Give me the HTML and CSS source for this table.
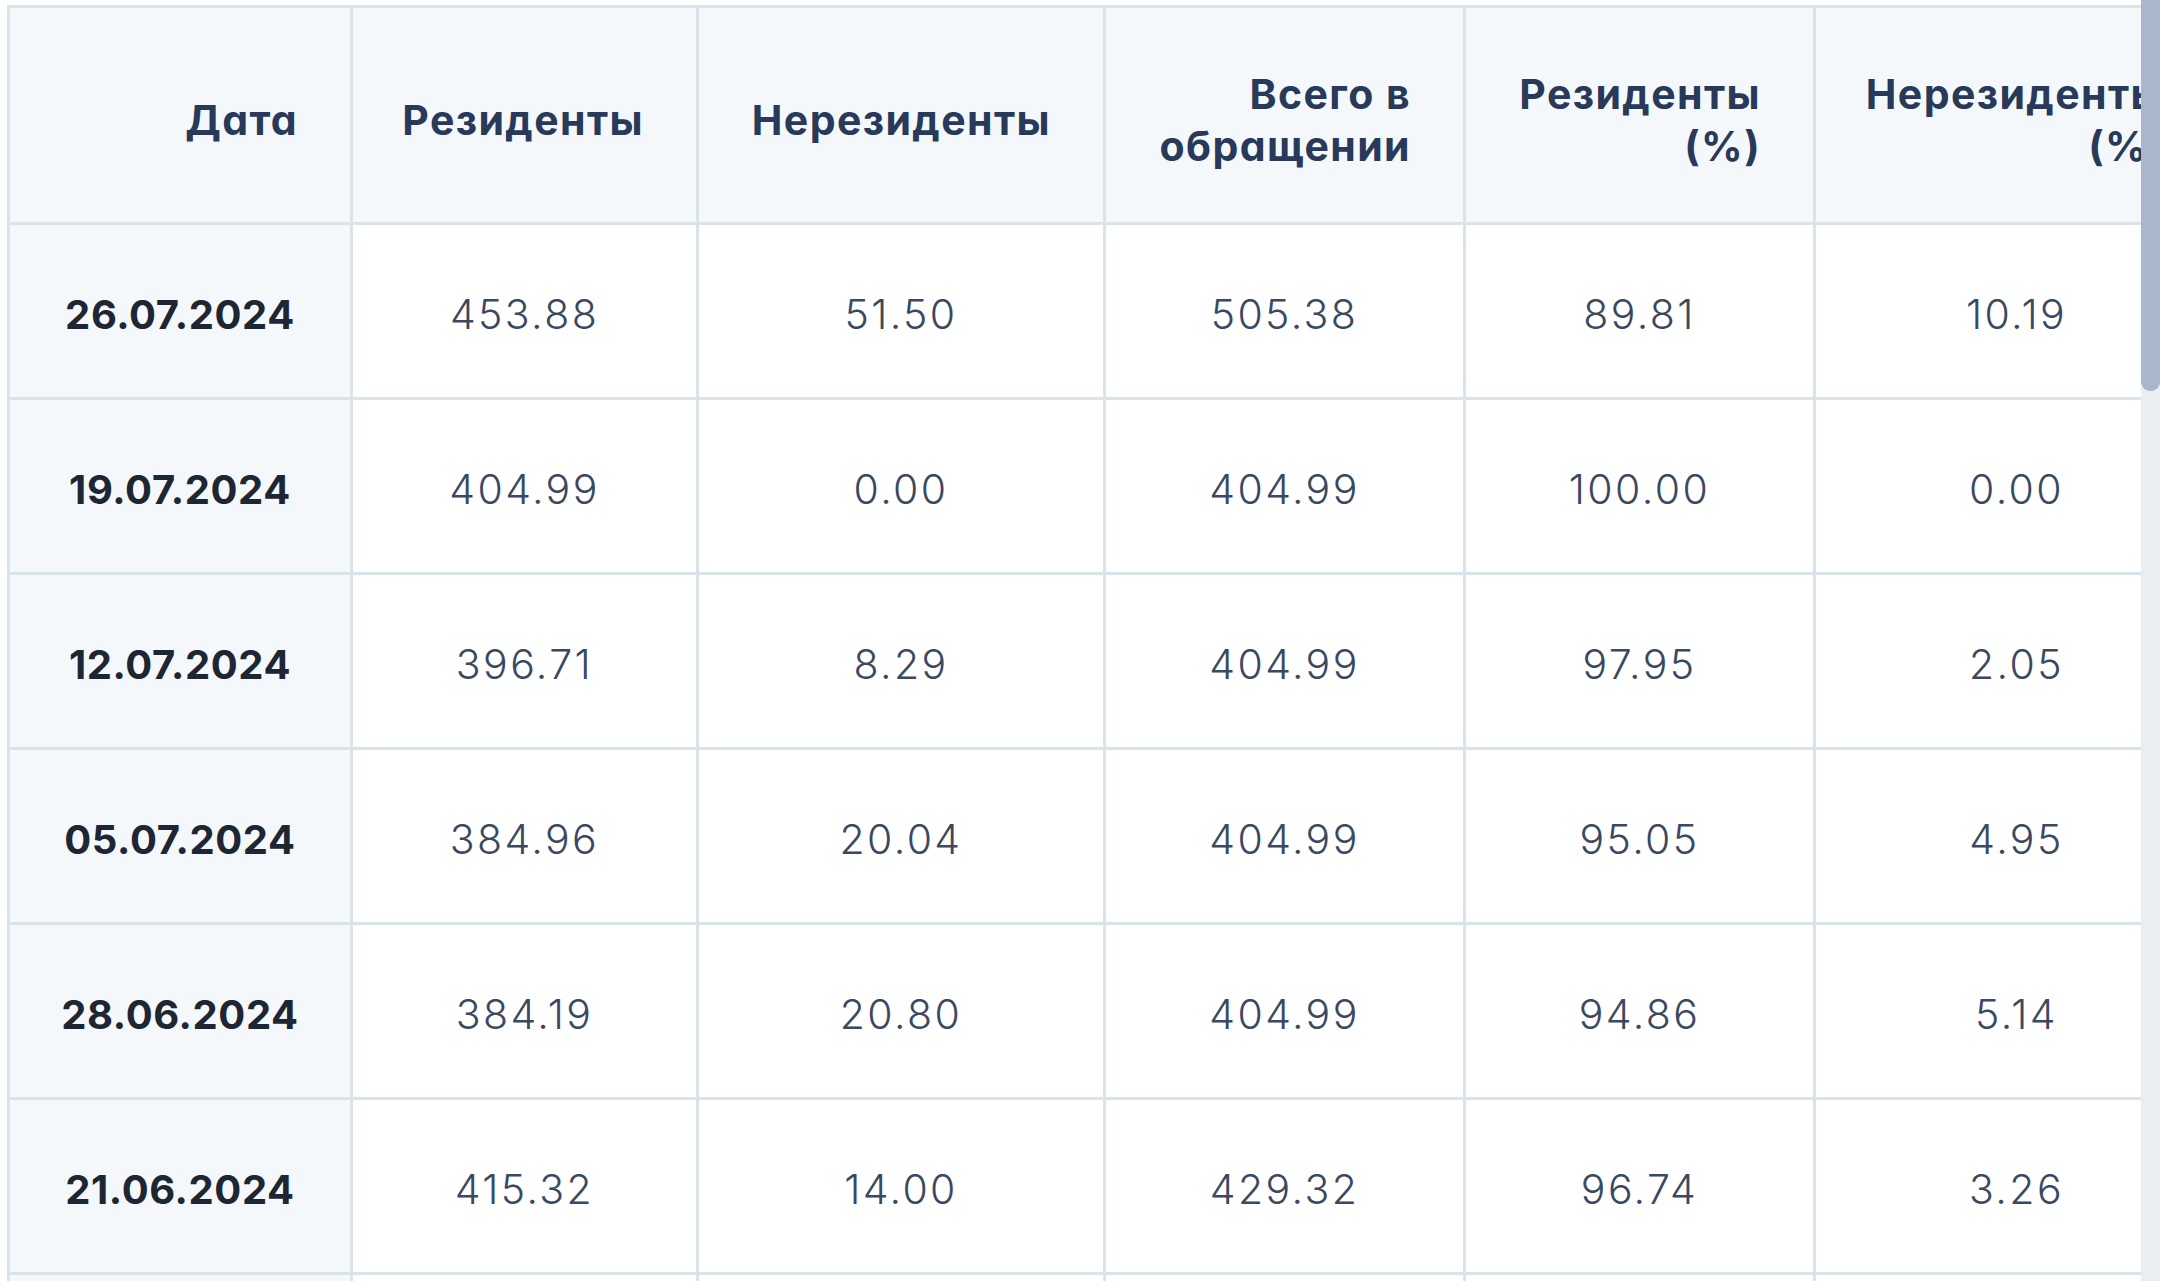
FILE: index.html
```html
<!DOCTYPE html>
<html lang="ru">
<head>
<meta charset="utf-8">
<title>Объём в обращении</title>
<link rel="stylesheet" href="styles.css">
</head>
<body>
<div class="frame">
  <div class="viewport">
    <table class="grid">
      <colgroup>
        <col class="c-date">
        <col class="c-res">
        <col class="c-nonres">
        <col class="c-total">
        <col class="c-resp">
        <col class="c-nonresp">
      </colgroup>
      <thead>
        <tr>
          <th class="h">Дата</th>
          <th class="h">Резиденты</th>
          <th class="h">Нерезиденты</th>
          <th class="h">Всего в обращении</th>
          <th class="h h-joined">Резиденты (%)</th>
          <th class="h">Нерезиденты (%)</th>
        </tr>
      </thead>
      <tbody>
        <tr><td class="d">26.07.2024</td><td>453.88</td><td>51.50</td><td>505.38</td><td>89.81</td><td>10.19</td></tr>
        <tr><td class="d">19.07.2024</td><td>404.99</td><td>0.00</td><td>404.99</td><td>100.00</td><td>0.00</td></tr>
        <tr><td class="d">12.07.2024</td><td>396.71</td><td>8.29</td><td>404.99</td><td>97.95</td><td>2.05</td></tr>
        <tr><td class="d">05.07.2024</td><td>384.96</td><td>20.04</td><td>404.99</td><td>95.05</td><td>4.95</td></tr>
        <tr><td class="d">28.06.2024</td><td>384.19</td><td>20.80</td><td>404.99</td><td>94.86</td><td>5.14</td></tr>
        <tr><td class="d">21.06.2024</td><td>415.32</td><td>14.00</td><td>429.32</td><td>96.74</td><td>3.26</td></tr>
        <tr><td class="d"></td><td></td><td></td><td></td><td></td><td></td></tr>
      </tbody>
    </table>
  </div>
  <div class="scrollbar"><div class="thumb"></div></div>
</div>
</body>
</html>
```

FILE: styles.css
```css
* { box-sizing: border-box; }

html, body {
  margin: 0;
  padding: 0;
  background: #ffffff;
}

body {
  font-family: "Inter", "Noto Sans", "DejaVu Sans", sans-serif;
  font-feature-settings: "cv11" 1;
}

.frame {
  display: flex;
  width: 2160px;
  height: 1281px;
  overflow: hidden;
}

.viewport {
  flex: 1;
  overflow: hidden;
  padding: 5px 0 0 7px;
}

.grid {
  border-collapse: collapse;
  table-layout: fixed;
  width: 2210px;
}

.c-date { width: 343px; }
.c-res { width: 346px; }
.c-nonres { width: 407px; }
.c-total { width: 360px; }
.c-resp { width: 350px; }
.c-nonresp { width: 404px; }

.grid th,
.grid td {
  border: 3px solid #d9e3ea;
}

.h {
  height: 217px;
  padding: 10px 52px 0 36px;
  background: #f5f8fb;
  color: #28395a;
  font-size: 41px;
  font-weight: 700;
  line-height: 52px;
  text-align: right;
  letter-spacing: 1.4px;
}

.h-joined {
  border-left-color: #f5f8fb;
}

.grid td {
  height: 175px;
  padding: 6px 0 0 0;
  text-align: center;
  color: #3a4862;
  font-size: 41px;
  font-weight: 300;
  letter-spacing: 2.4px;
  background: #ffffff;
}

.grid td.d {
  background: #f5f8fb;
  color: #1f2633;
  font-size: 40px;
  font-weight: 700;
  letter-spacing: 0.6px;
}

.scrollbar {
  width: 19px;
  flex: none;
  background: #e9eef2;
}

.thumb {
  height: 391px;
  background: #a9b6cb;
  border-radius: 0 0 9px 9px;
}
```
